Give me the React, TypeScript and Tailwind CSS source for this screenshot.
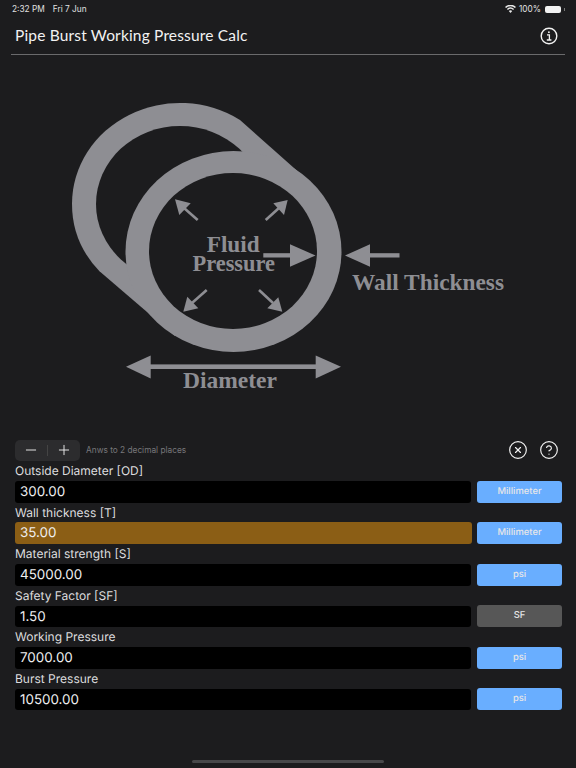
import React from "react";
import { CircleX, CircleHelp, Minus, Plus } from "lucide-react";

const BG = "#1c1c1e";
const G = "#8e8e93";

function Diagram() {
  return (
    <svg viewBox="0 55 576 383" className="block w-[576px] h-[383px]">
      <path d="M240 120.02 L316 187.5 L175 336 L99.5 271.33 A108 101 0 0 1 72 204 A108 101 0 0 1 240 120.02 Z" fill={G} />
      <ellipse cx="180" cy="204" rx="84" ry="78" fill={BG} />
      <ellipse cx="233.5" cy="251.5" rx="108" ry="100.5" fill={G} />
      <ellipse cx="233" cy="251" rx="84" ry="78" fill={BG} />
      {/* radial arrows */}
      <g stroke={G} strokeWidth="2.6" fill="none">
        <line x1="197.7" y1="220" x2="184" y2="208" />
        <line x1="265.7" y1="220" x2="279" y2="208" />
        <line x1="206.7" y1="290" x2="192" y2="303" />
        <line x1="259" y1="290" x2="273" y2="303" />
      </g>
      <g fill={G}>
        <polygon points="175,199.3 190.7,203.3 179.3,215" />
        <polygon points="287.7,200 273.3,203.3 284,215" />
        <polygon points="183.3,311.7 187.3,296.7 198.3,308.3" />
        <polygon points="282.3,311.7 278.3,297.3 267.3,308.3" />
        {/* horizontal arrows */}
        <rect x="263.3" y="253.2" width="28" height="4.3" />
        <polygon points="315.5,255.4 290,244.2 290,266.8" />
        <rect x="368" y="253.2" width="31.5" height="4.3" />
        <polygon points="345,255.4 370,244.2 370,266.8" />
        <rect x="149" y="364.4" width="168" height="4.6" />
        <polygon points="126,366.8 150.7,355.6 150.7,378.4" />
        <polygon points="341,366.8 315.7,355.6 315.7,378.4" />
      </g>
      <g fill={G} style={{ fontFamily: '"Liberation Serif", serif', fontWeight: 700 }}>
        <text x="206.7" y="251.5" fontSize="23" textLength="53" lengthAdjust="spacingAndGlyphs">Fluid</text>
        <text x="192.5" y="270.5" fontSize="23" textLength="82.5" lengthAdjust="spacingAndGlyphs">Pressure</text>
        <text x="352" y="290" fontSize="23" textLength="152" lengthAdjust="spacingAndGlyphs">Wall Thickness</text>
        <text x="183" y="387.5" fontSize="23" textLength="94" lengthAdjust="spacingAndGlyphs">Diameter</text>
      </g>
    </svg>
  );
}

function Row({ label, value, unit, tone, highlight }: { label: string; value: string; unit: string; tone: "blue" | "gray"; highlight?: boolean }) {
  return (
    <div className="flex flex-col h-[41.5px]">
      <div className="h-[20px] text-[12px] leading-[20px] text-[#dcdcde] [text-rendering:geometricPrecision]">{label}</div>
      <div className="flex items-start">
        <div className={`rounded-[3px] px-[5px] text-[13.4px] leading-[23px] text-[#efeff0] [text-rendering:geometricPrecision] ${highlight ? "w-[457px] h-[22px] -mt-[0.5px] bg-[#8b5e15] mr-[5px]" : "w-[456px] h-[21.5px] bg-black mr-[6px]"}`}>
          {value}
        </div>
        <div className={`w-[85px] h-[22px] -mt-[0.5px] pt-[1px] rounded-[3px] flex items-center justify-center text-[9.4px] font-medium text-[#e6e6e8] [text-rendering:geometricPrecision] ${tone === "blue" ? "bg-[#69aeff]" : "bg-[#575757]"}`}>
          {unit}
        </div>
      </div>
    </div>
  );
}

export default function App() {
  return (
    <div className="w-[576px] h-[768px] overflow-hidden bg-[#1c1c1e] text-white flex flex-col" style={{ fontFamily: 'Inter, "Liberation Sans", sans-serif' }}>
      {/* status bar */}
      <div className="h-[17px] pt-[1px] pl-[12px] pr-[11px] flex items-center justify-between text-[8.3px] text-[#e0e0e0]">
        <div className="flex gap-[8px]">
          <span>2:32 PM</span>
          <span>Fri 7 Jun</span>
        </div>
        <div className="flex items-center gap-[3px]">
          <svg width="11" height="8" viewBox="0 0 11 8" fill="#e8e8e8">
            <path d="M5.5 8 L3.8 6 A2.6 2.6 0 0 1 7.2 6 Z" />
            <path d="M2.9 5 L1.9 3.9 A5.4 5.4 0 0 1 9.1 3.9 L8.1 5 A3.9 3.9 0 0 0 2.9 5 Z" />
            <path d="M1.1 3 L0 1.9 A8 8 0 0 1 11 1.9 L9.9 3 A6.5 6.5 0 0 0 1.1 3 Z" />
          </svg>
          <span>100%</span>
          <span className="ml-[1px] w-[16px] h-[7px] rounded-[2px] bg-[#f2f2f2]" />
          <span className="w-[1px] h-[3px] bg-[#777]" />
        </div>
      </div>
      {/* nav */}
      <div className="h-[38px] mx-[11px] border-b border-[#6a6a6c] flex items-center justify-between pl-[4px] pr-[7.5px]">
        <span className="text-[15.5px] text-[#f2f2f2]" style={{ fontFamily: 'Lato, sans-serif', letterSpacing: "0.17px" }}>Pipe Burst Working Pressure Calc</span>
        <svg width="18" height="18" viewBox="0 0 18 18" fill="none" stroke="#f2f2f2">
          <circle cx="9" cy="9" r="7.8" strokeWidth="1.4" />
          <path d="M7 7.8 H9.4 V12.8 M6.8 13 H11.4" strokeWidth="1.3" />
          <circle cx="8.9" cy="5.2" r="0.9" fill="#f2f2f2" stroke="none" />
        </svg>
      </div>
      <Diagram />
      {/* toolbar */}
      <div className="h-[22px] mt-[1px] pl-[15px] pr-[17px] flex items-center justify-between">
        <div className="flex items-center gap-[6px]">
          <div className="w-[65px] h-[21px] rounded-[5px] bg-[#2c2c2e] flex items-center">
            <span className="w-[32px] flex justify-center"><Minus size={16} strokeWidth={1.4} color="#f0f0f0" /></span>
            <span className="w-px h-[11px] bg-[#444]" />
            <span className="w-[32px] flex justify-center"><Plus size={16} strokeWidth={1.4} color="#f0f0f0" /></span>
          </div>
          <span className="text-[8.3px] text-[#77777a]">Anws to 2 decimal places</span>
        </div>
        <div className="flex items-center gap-[11px]">
          <CircleX size={20} strokeWidth={1.4} color="#f2f2f2" />
          <CircleHelp size={20} strokeWidth={1.4} color="#f2f2f2" />
        </div>
      </div>
      {/* rows */}
      <div className="pl-[15px] flex flex-col">
        <Row label="Outside Diameter [OD]" value="300.00" unit="Millimeter" tone="blue" />
        <Row label="Wall thickness [T]" value="35.00" unit="Millimeter" tone="blue" highlight />
        <Row label="Material strength [S]" value="45000.00" unit="psi" tone="blue" />
        <Row label="Safety Factor [SF]" value="1.50" unit="SF" tone="gray" />
        <Row label="Working Pressure" value="7000.00" unit="psi" tone="blue" />
        <Row label="Burst Pressure" value="10500.00" unit="psi" tone="blue" />
      </div>
      <div className="mt-auto mb-[5px] mx-auto w-[192px] h-[3px] rounded-full bg-[#48484a]" />
    </div>
  );
}
